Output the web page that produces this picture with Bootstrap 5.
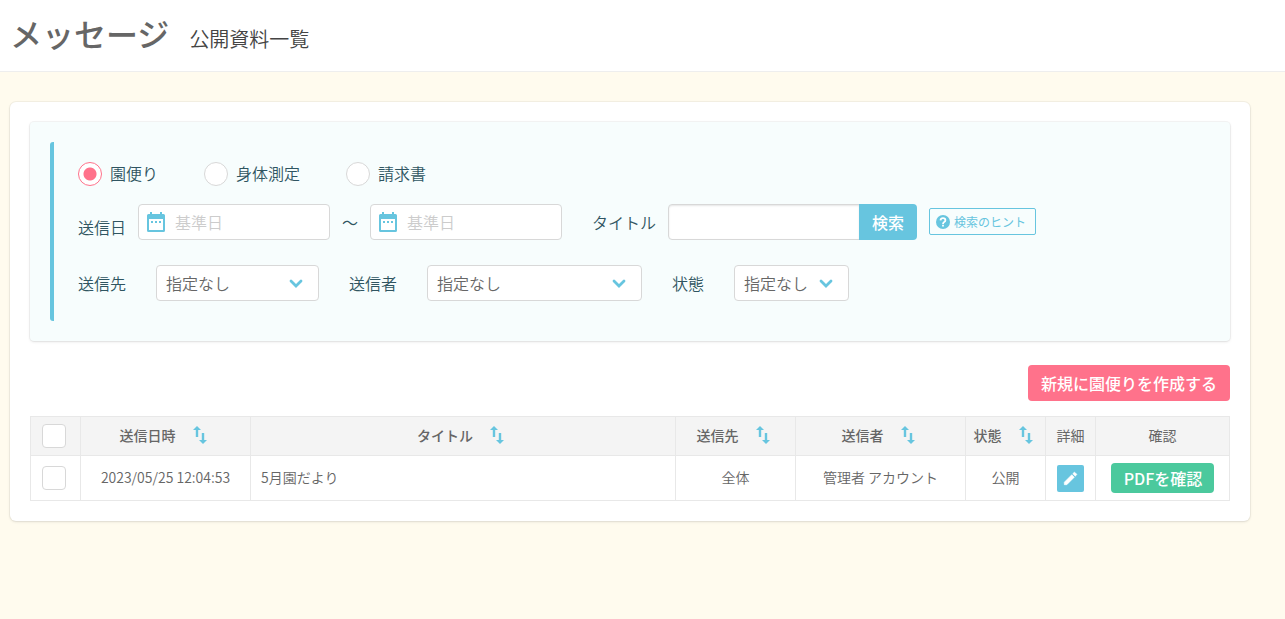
<!DOCTYPE html>
<html lang="ja">
<head>
<meta charset="utf-8">
<meta name="viewport" content="width=device-width, initial-scale=1">
<title>メッセージ 公開資料一覧</title>
<link href="https://cdn.jsdelivr.net/npm/bootstrap@5.3.0/dist/css/bootstrap.min.css" rel="stylesheet">
<style>
:root { --sky: #67c5df; --pink: #ff728b; --mint: #4bc99d; --ink: #666; --deep: #2f5561; --line: #ddd; }
body { font-family: "Noto Sans CJK JP", sans-serif; font-size: 16px; line-height: 24px; font-weight: 350; color: var(--ink); background: #fffbee; }
.page-head { background: #fff; border-bottom: 1px solid #eee; padding: 9px 10px 14px; gap: 20px; }
.page-head h1 { font-size: 32px; line-height: 48px; font-weight: 500; color: #666; }
.page-head .sub { font-size: 20px; line-height: 30px; color: #444; }
main { padding: 30px 35px 30px 10px; }
.sheet { background: #fff; border: 0; border-radius: 6px; padding: 20px; box-shadow: 0 0 0 1px rgba(0,0,0,.04), 0 1px 3px rgba(0,0,0,.1); }
.search-box { background: #f7fdfd; border-radius: 4px; padding: 20px; margin-bottom: 24px; color: var(--deep); box-shadow: 0 0 0 1px rgba(0,0,0,.04), 0 1px 3px rgba(0,0,0,.1); }
.search-bar { border-left: 4px solid var(--sky); border-radius: 3px 0 0 3px; padding: 20px 24px; }
.kinds { gap: 12px 46px; margin-bottom: 18px; }
.kinds label { line-height: 22px; }
.line-fields { gap: 12px 30px; }
.next-row { margin-top: 25px; }
.pair { gap: 12px; }
.pair .low { line-height: 26px; }
.pair-wide { gap: 30px; }
.form-check-input, .form-check-input:checked { width: 24px; height: 24px; background-color: #fff; border: 1px solid #d8d8d8; float: none; flex: none; margin: 0; }
.form-check-input[type=radio]:checked { border-color: var(--pink); background-image: radial-gradient(circle, var(--pink) 6px, transparent 7px); }
.form-check-input[type=checkbox] { border-radius: 4px; display: block; }
.form-control, .form-select { height: 36px; font-size: 16px; line-height: 24px; font-weight: 350; padding: 5px 9px; border: 1px solid #d8d8d8; border-radius: 4px; color: var(--ink); background-color: #fff; }
.date-box { width: 192px; position: relative; }
.date-box .form-control { padding-left: 36px; }
.date-box svg { position: absolute; left: 9px; top: 8px; }
.form-control::placeholder { color: #ccc; opacity: 1; }
.word-box { width: 249px; }
.word-box .form-control { box-shadow: inset 0 1px 2px rgba(0,0,0,.1); }
.word-box .btn { background: var(--sky); color: #fff; font-weight: 500; border: 0; width: 58px; padding: 6px 0; line-height: 24px; font-size: 16px; border-radius: 0 4px 4px 0; }
.form-select { background-image: url("data:image/svg+xml,%3Csvg xmlns='http://www.w3.org/2000/svg' viewBox='0 0 14 14'%3E%3Cpath d='M2 5l5 5 5-5' fill='none' stroke='%2367c5df' stroke-width='2.8' stroke-linecap='round'/%3E%3C/svg%3E"); background-size: 14px 14px; background-position: right 15px center; padding-right: 36px; }
.w-to { width: 163px; } .w-from { width: 215px; } .w-state { width: 115px; }
.btn.btn-hint { border: 1px solid var(--sky); border-radius: 2px; color: var(--sky); font-size: 12px; line-height: 17px; padding: 4px 9px 4px 6px; margin-bottom: 1px; gap: 4px; font-weight: 400; background: #f7fdfd; }
.btn-new { background: var(--pink); color: #fff; font-weight: 500; border: 0; font-size: 16px; line-height: 24px; padding: 6px 13px; margin-bottom: 15px; border-radius: 4px; }
.list { table-layout: fixed; font-size: 14px; line-height: 21px; margin: 0; color: var(--ink); border-color: #e8e8e8; min-width: 1000px; text-align: center; }
.list > :not(caption) > * > * { padding: 6px 10px 8px; border: 1px solid #e8e8e8; color: inherit; vertical-align: middle; }
.list th { background: #f4f4f4; font-weight: 500; white-space: nowrap; }
.list tr > .plain { font-weight: 400; }
.list thead tr { height: 39px; } .list tbody tr { height: 45px; }
.list th a { color: inherit; text-decoration: none; gap: 17px; padding-right: 5px; }
.btn-edit { background: var(--sky); width: 27px; height: 27px; border: 0; border-radius: 2px; padding: 0; }
.btn-pdf { background: var(--mint); color: #fff; font-weight: 500; border: 0; font-size: 16px; line-height: 24px; padding: 3px 12px 3px 13px; border-radius: 4px; white-space: nowrap; }
.btn-edit, .btn-pdf { display: block; margin: 0 auto; }
.btn-edit svg, .list th svg, .btn-hint svg { display: block; flex: none; }
.list > :not(caption) > * > .tight { padding: 0; }
.list > :not(caption) > * > .pick { padding: 0 11px; }
.list > :not(caption) > * > .narrow { padding-left: 7px; padding-right: 7px; }
</style>
</head>
<body>
<svg width="0" height="0" class="position-absolute" aria-hidden="true">
  <symbol id="cal" viewBox="0 0 18 20"><path fill="#67c5df" fill-rule="evenodd" d="M3 0h2v2h8V0h2v2h1.500Q18 2 18 3.500V18.500Q18 20 16.500 20h-15Q0 20 0 18.500V3.500Q0 2 1.500 2H3zM2 7v11h14V7zM4 9h2v2H4zm4 0h2v2H8zm4 0h2v2h-2z"/></symbol>
  <symbol id="sort" viewBox="0 0 14 18"><path fill="#67c5df" d="M4 0l4 4H5.200v7H2.800V4H0zM8.800 7h2.400v7H14l-4 4-4-4h2.800z"/></symbol>
</svg>
<header class="page-head d-flex flex-wrap align-items-baseline">
  <h1 class="m-0">メッセージ</h1><span class="sub">公開資料一覧</span>
</header>
<main>
  <section class="card sheet">
    <form class="search-box" onsubmit="return false">
      <div class="search-bar">
        <div class="kinds d-flex flex-wrap">
          <div class="d-flex gap-2"><input class="form-check-input" type="radio" name="kind" id="k1" checked><label for="k1">園便り</label></div>
          <div class="d-flex gap-2"><input class="form-check-input" type="radio" name="kind" id="k2"><label for="k2">身体測定</label></div>
          <div class="d-flex gap-2"><input class="form-check-input" type="radio" name="kind" id="k3"><label for="k3">請求書</label></div>
        </div>
        <div class="line-fields d-flex flex-wrap">
          <div class="pair d-flex align-items-center">
            <label for="d1" class="low align-self-end">送信日</label>
            <div class="date-box"><input class="form-control" type="text" id="d1" placeholder="基準日"><svg width="18" height="20" aria-hidden="true"><use href="#cal"/></svg></div>
            <span>～</span>
            <div class="date-box"><input class="form-control" type="text" id="d2" placeholder="基準日" aria-label="送信日（終了）"><svg width="18" height="20" aria-hidden="true"><use href="#cal"/></svg></div>
          </div>
          <div class="pair d-flex align-items-center">
            <label for="word">タイトル</label>
            <div class="input-group word-box"><input class="form-control" type="text" id="word"><button class="btn" type="submit">検索</button></div>
            <button type="button" class="btn btn-hint d-flex align-items-center"><svg width="14" height="14" viewBox="0 0 14 14" aria-hidden="true"><circle cx="7" cy="7" r="7" fill="#67c5df"/><path d="M4.500 5.300Q4.700 3.200 7 3.200T9.400 5.200Q9.400 6.300 8.200 7T7 8.900" fill="none" stroke="#fff" stroke-width="1.800"/><path d="M6.100 9.800h1.800v1.700H6.100z" fill="#fff"/></svg>検索のヒント</button>
          </div>
        </div>
        <div class="line-fields next-row d-flex flex-wrap">
          <div class="pair-wide d-flex align-items-center"><label for="s1">送信先</label><select class="form-select w-to" id="s1"><option>指定なし</option></select></div>
          <div class="pair-wide d-flex align-items-center"><label for="s2">送信者</label><select class="form-select w-from" id="s2"><option>指定なし</option></select></div>
          <div class="pair-wide d-flex align-items-center"><label for="s3">状態</label><select class="form-select w-state" id="s3"><option>指定なし</option></select></div>
        </div>
      </div>
    </form>
    <div class="d-flex justify-content-end"><button type="button" class="btn btn-new">新規に園便りを作成する</button></div>
    <div class="table-responsive">
      <table class="table list">
        <colgroup><col style="width:50px"><col style="width:170px"><col><col style="width:120px"><col style="width:170px"><col style="width:80px"><col style="width:50px"><col style="width:134px"></colgroup>
        <thead><tr>
          <th class="pick"><input class="form-check-input" type="checkbox" aria-label="すべて選択"></th>
          <th><a href="#" class="d-flex justify-content-center align-items-center">送信日時<svg width="14" height="18"><use href="#sort"/></svg></a></th>
          <th><a href="#" class="d-flex justify-content-center align-items-center">タイトル<svg width="14" height="18"><use href="#sort"/></svg></a></th>
          <th><a href="#" class="d-flex justify-content-center align-items-center">送信先<svg width="14" height="18"><use href="#sort"/></svg></a></th>
          <th><a href="#" class="d-flex justify-content-center align-items-center">送信者<svg width="14" height="18"><use href="#sort"/></svg></a></th>
          <th class="narrow"><a href="#" class="d-flex justify-content-center align-items-center">状態<svg width="14" height="18"><use href="#sort"/></svg></a></th>
          <th class="plain">詳細</th>
          <th class="plain">確認</th>
        </tr></thead>
        <tbody><tr>
          <td class="pick"><input class="form-check-input" type="checkbox" aria-label="5月園だよりを選択"></td>
          <td>2023/05/25 12:04:53</td>
          <td class="text-start">5月園だより</td>
          <td>全体</td>
          <td>管理者 アカウント</td>
          <td>公開</td>
          <td class="tight"><button type="button" class="btn btn-edit" aria-label="編集"><svg class="mx-auto" width="15" height="15" viewBox="0 0 15 15" aria-hidden="true"><path fill="#fff" stroke="#fff" stroke-width=".6" stroke-linejoin="round" d="M1.300 11.200L8.800 3.700l2.500 2.500L3.800 13.700H1.300zM9.800 2.700l1.200-1.200q.5-.5 1 0l1.500 1.500q.5.5 0 1l-1.200 1.200z"/></svg></button></td>
          <td class="tight"><button type="button" class="btn btn-pdf">PDFを確認</button></td>
        </tr></tbody>
      </table>
    </div>
  </section>
</main>
<script src="https://cdn.jsdelivr.net/npm/bootstrap@5.3.0/dist/js/bootstrap.bundle.min.js"></script>
</body>
</html>
